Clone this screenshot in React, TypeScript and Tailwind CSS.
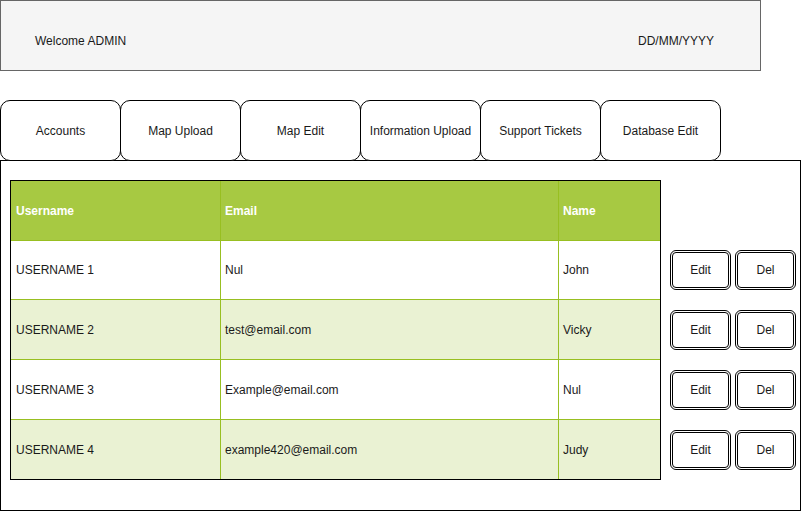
const tabs = ["Accounts", "Map Upload", "Map Edit", "Information Upload", "Support Tickets", "Database Edit"];

const rows = [
  { user: "USERNAME 1", email: "Nul", name: "John", h: "h-[59px] border-b", bg: "bg-white" },
  { user: "USERNAME 2", email: "test@email.com", name: "Vicky", h: "h-[60px] border-b", bg: "bg-[#eaf2d3]" },
  { user: "USERNAME 3", email: "Example@email.com", name: "Nul", h: "h-[60px] border-b", bg: "bg-white" },
  { user: "USERNAME 4", email: "example420@email.com", name: "Judy", h: "h-[59px]", bg: "bg-[#eaf2d3]" },
];

export default function App() {
  return (
    <div className="w-[801px] h-[511px] bg-white text-[12px] text-[#1a1a1a] overflow-hidden" style={{ fontFamily: '"Liberation Sans", Arial, sans-serif' }}>
      {/* header */}
      <div className="w-[761px] h-[71px] border border-[#666666] bg-[#f5f5f5] flex items-center justify-between pl-[34px] pr-[46px] pt-[10px]">
        <span>Welcome ADMIN</span>
        <span>DD/MM/YYYY</span>
      </div>

      {/* tabs */}
      <div className="flex mt-[29px] pl-px">
        {tabs.map((t) => (
          <div key={t} className="w-[121px] h-[61px] -ml-px border border-black rounded-[10px] bg-white flex items-center justify-center">
            {t}
          </div>
        ))}
      </div>

      {/* content */}
      <div className="w-[801px] h-[351px] -mt-px border border-black flex items-start pl-[9px] pt-[19px]">
        <div className="w-[651px] border border-black">
          <div className="grid grid-cols-[210px_338px_101px] h-[60px] bg-[#a7c942] border-b border-[#98bf21] text-white font-bold">
            <div className="border-r border-[#98bf21] flex items-center pl-[5px]">Username</div>
            <div className="border-r border-[#98bf21] flex items-center pl-[4px]">Email</div>
            <div className="flex items-center pl-[4px]">Name</div>
          </div>
          {rows.map((r) => (
            <div key={r.user} className={`grid grid-cols-[210px_338px_101px] border-[#98bf21] ${r.h} ${r.bg}`}>
              <div className="border-r border-[#98bf21] flex items-center pl-[5px]">{r.user}</div>
              <div className="border-r border-[#98bf21] flex items-center pl-[4px]">{r.email}</div>
              <div className="flex items-center pl-[4px]">{r.name}</div>
            </div>
          ))}
        </div>

        {/* actions */}
        <div className="ml-[9px] mt-[70px] flex flex-col gap-[20px]">
          {rows.map((r) => (
            <div key={r.user} className="flex gap-[4px]">
              <button className="w-[61px] h-[40px] border-[3px] border-double border-black rounded-[6px] bg-white">Edit</button>
              <button className="w-[61px] h-[40px] border-[3px] border-double border-black rounded-[6px] bg-white">Del</button>
            </div>
          ))}
        </div>
      </div>
    </div>
  );
}
